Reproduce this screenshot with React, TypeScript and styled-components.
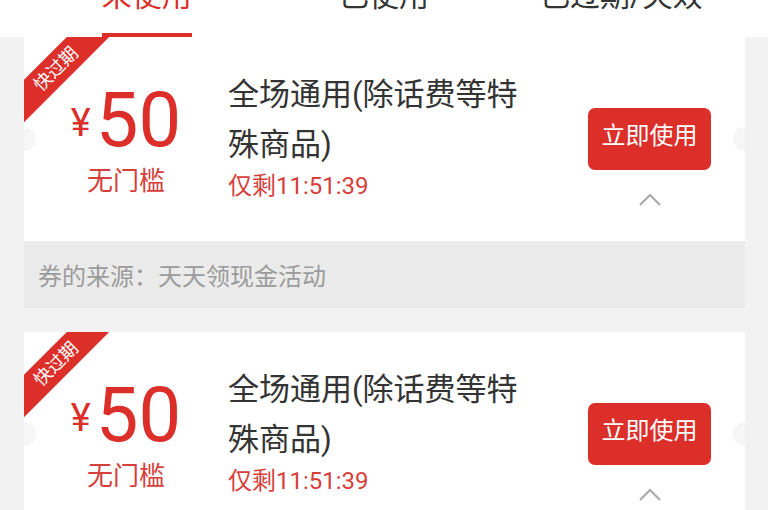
import React from 'react';
import styled, { createGlobalStyle } from 'styled-components';

const RED = '#dc2f2a';

const GlobalStyle = createGlobalStyle`
  html, body {
    margin: 0;
    padding: 0;
    background: #f2f2f2;
  }
  body {
    font-family: Roboto, "Noto Sans CJK SC", sans-serif;
  }
  * {
    box-sizing: border-box;
  }
`;

const tabs = ['未使用', '已使用', '已过期/失效'];

const coupons = [
  { id: 1, title: '全场通用(除话费等特殊商品)', left: '仅剩11:51:39', source: '天天领现金活动' },
  { id: 2, title: '全场通用(除话费等特殊商品)', left: '仅剩11:51:39', source: '天天领现金活动' },
];

export default function App() {
  return (
    <Page>
      <GlobalStyle />
      <TabBar>
        {tabs.map((t, i) => (
          <Tab key={t}>
            <TabLabel $active={i === 0}>{t}</TabLabel>
            {i === 0 && <Underline />}
          </Tab>
        ))}
      </TabBar>
      <List>
        {coupons.map((c) => (
          <Coupon key={c.id}>
            <CouponBody>
              <Ribbon>快过期</Ribbon>
              <Notch $side="left" />
              <Notch $side="right" />
              <AmountCol>
                <AmountRow>
                  <Currency>¥</Currency>
                  <Value>50</Value>
                </AmountRow>
                <Threshold>无门槛</Threshold>
              </AmountCol>
              <InfoCol>
                <Title>{c.title}</Title>
                <Timer>{c.left}</Timer>
              </InfoCol>
              <ActionCol>
                <UseButton>立即使用</UseButton>
                <svg width="24" height="14" viewBox="0 0 24 14">
                  <polyline points="2,12 12,2 22,12" fill="none" stroke="#a8a8a8" strokeWidth="2" />
                </svg>
              </ActionCol>
            </CouponBody>
            <Source>券的来源：{c.source}</Source>
          </Coupon>
        ))}
      </List>
    </Page>
  );
}

const Page = styled.div`
  width: 768px;
  height: 510px;
  overflow: hidden;
  background: #f2f2f2;
`;

const TabBar = styled.div`
  display: flex;
  height: 37px;
  padding: 0 28px;
  background: #fff;
  overflow: hidden;
`;

const Tab = styled.div`
  flex: 1;
  display: flex;
  flex-direction: column;
  align-items: center;
  justify-content: space-between;
`;

const TabLabel = styled.div<{ $active?: boolean }>`
  margin-top: -19px;
  font-size: 30px;
  line-height: 30px;
  color: ${({ $active }) => ($active ? RED : '#333')};
`;

const Underline = styled.div`
  width: 90px;
  height: 4px;
  background: ${RED};
`;

const List = styled.div`
  display: flex;
  flex-direction: column;
  gap: 24px;
  padding: 0 23px 0 24px;
`;

const Coupon = styled.div`
  display: flex;
  flex-direction: column;
`;

const CouponBody = styled.div`
  position: relative;
  display: flex;
  height: 204px;
  background: #fff;
  overflow: hidden;
`;

const Ribbon = styled.div`
  position: absolute;
  left: -38px;
  top: 17px;
  width: 140px;
  height: 30px;
  transform: rotate(-45deg);
  background: ${RED};
  color: #fff;
  font-size: 18px;
  line-height: 30px;
  text-align: center;
`;

const Notch = styled.div<{ $side: 'left' | 'right' }>`
  position: absolute;
  top: 50%;
  ${({ $side }) => $side}: -12px;
  width: 24px;
  height: 24px;
  margin-top: -12px;
  border-radius: 50%;
  background: #f6f6f6;
`;

const AmountCol = styled.div`
  display: flex;
  flex-direction: column;
  align-items: center;
  width: 204px;
  padding-top: 45px;
`;

const AmountRow = styled.div`
  display: flex;
  align-items: center;
  gap: 5px;
  color: ${RED};
`;

const Currency = styled.span`
  margin-top: 6px;
  font-size: 38px;
  line-height: 1;
`;

const Value = styled.span`
  font-size: 76px;
  line-height: 76px;
`;

const Threshold = styled.div`
  margin-top: 8px;
  font-size: 26px;
  line-height: 30px;
  color: #d6403b;
`;

const InfoCol = styled.div`
  width: 300px;
  padding-top: 33px;
`;

const Title = styled.div`
  font-size: 31px;
  line-height: 50px;
  color: #333;
`;

const Timer = styled.div`
  margin-top: 4px;
  font-size: 24px;
  line-height: 24px;
  color: #d6403b;
`;

const ActionCol = styled.div`
  display: flex;
  flex-direction: column;
  align-items: center;
  gap: 23px;
  margin-left: auto;
  margin-right: 34px;
  padding-top: 71px;
`;

const UseButton = styled.button`
  width: 123px;
  height: 62px;
  border: none;
  border-radius: 7px;
  background: ${RED};
  color: #fff;
  font-family: inherit;
  font-size: 24px;
  line-height: 1;
  padding: 0 0 6px;
`;

const Source = styled.div`
  display: flex;
  align-items: center;
  height: 67px;
  padding-left: 14px;
  background: #ebebeb;
  font-size: 24px;
  color: #9b9b9b;
`;
